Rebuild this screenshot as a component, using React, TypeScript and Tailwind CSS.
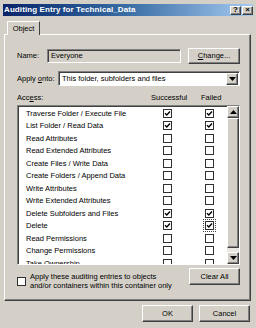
const rows = [
  { name: "Traverse Folder / Execute File", s: true, f: true },
  { name: "List Folder / Read Data", s: true, f: true },
  { name: "Read Attributes", s: false, f: false },
  { name: "Read Extended Attributes", s: false, f: false },
  { name: "Create Files / Write Data", s: false, f: false },
  { name: "Create Folders / Append Data", s: false, f: false },
  { name: "Write Attributes", s: false, f: false },
  { name: "Write Extended Attributes", s: false, f: false },
  { name: "Delete Subfolders and Files", s: true, f: true },
  { name: "Delete", s: true, f: true, focus: true },
  { name: "Read Permissions", s: false, f: false },
  { name: "Change Permissions", s: false, f: false },
  { name: "Take Ownership", s: false, f: false },
]

const raised =
  "border border-t-white border-l-white border-r-[#404040] border-b-[#404040] shadow-[inset_-1px_-1px_#808080] bg-[#d4d0c8]"
const sunken =
  "border border-t-[#808080] border-l-[#808080] border-r-white border-b-white shadow-[inset_1px_1px_#404040]"

function Check({ on, focus }: { on: boolean; focus?: boolean }) {
  return (
    <div className={focus ? "outline outline-1 outline-dotted outline-[#404040] outline-offset-1" : ""}>
      <div className="w-[9px] h-[9px] bg-white border border-[#303030] flex items-center justify-center">
        {on && (
          <svg width="7" height="7" viewBox="0 0 7 7">
            <path d="M1 3.2 L2.8 5 L6 1.5" stroke="#000" strokeWidth="1.4" fill="none" />
          </svg>
        )}
      </div>
    </div>
  )
}

function Arrow({ up }: { up?: boolean }) {
  return (
    <div className={`${raised} w-[12px] h-[12px] flex items-center justify-center`}>
      <svg width="7" height="4" viewBox="0 0 7 4">
        <path d={up ? "M0 4 L3.5 0 L7 4 Z" : "M0 0 L3.5 4 L7 0 Z"} fill="#000" />
      </svg>
    </div>
  )
}

export default function App() {
  return (
    <div
      className="w-[256px] h-[328px] bg-[#d4d0c8] overflow-hidden text-[7.5px] text-black px-[3px] pt-[4px]"
      style={{ fontFamily: '"Liberation Sans", Arial, sans-serif' }}
    >
      {/* title bar */}
      <div className="h-[12px] flex items-center justify-between pl-[1px] pr-[0px] bg-gradient-to-r from-[#0a246a] via-[#3a6ea5] to-[#a6caf0]">
        <span className="text-white font-bold text-[8px] leading-none tracking-[0.1px]">
          Auditing Entry for Technical_Data
        </span>
        <div className="flex gap-[1px]">
          <div className={`${raised} w-[11px] h-[9px] flex items-center justify-center text-[8px] font-bold leading-none`}>?</div>
          <div className={`${raised} w-[11px] h-[9px] flex items-center justify-center text-[8px] font-bold leading-none`}>×</div>
        </div>
      </div>

      {/* tab */}
      <div className="mt-[5px] ml-[4px] w-[33px] h-[14px] border border-b-0 border-t-white border-l-white border-r-[#404040] relative z-10 flex items-center justify-center bg-[#d4d0c8]">
        <span className="leading-none">Object</span>
      </div>

      {/* panel */}
      <div className="-mt-[1px] ml-[1px] w-[247px] h-[267px] border border-t-white border-l-white border-r-[#404040] border-b-[#404040] shadow-[inset_-1px_-1px_#808080] pl-[12px] pr-[10px] pt-[13px]">
        <div className="flex items-center h-[16px]">
          <span className="w-[30px]">Name:</span>
          <div className={`${sunken} w-[134px] h-[14px] flex items-center pl-[3px] bg-[#d4d0c8]`}>Everyone</div>
          <div className={`${raised} ml-[7px] w-[52px] h-[16px] flex items-center justify-center`}>
            <span>
              <span className="underline">C</span>hange...
            </span>
          </div>
        </div>

        <div className="flex items-center h-[15px] mt-[7px]">
          <span className="w-[41px]">
            Apply <span className="underline">o</span>nto:
          </span>
          <div className={`${sunken} w-[182px] h-[15px] flex items-center bg-white pl-[3px] pr-[1px]`}>
            <span className="flex-1">This folder, subfolders and files</span>
            <Arrow />
          </div>
        </div>

        <div className="flex items-center h-[10px] mt-[7px]">
          <span className="w-[134px]">
            Acc<span className="underline">e</span>ss:
          </span>
          <span className="w-[50px]">Successful</span>
          <span>Failed</span>
        </div>

        <div className={`${sunken} mt-[2px] w-[223px] h-[160px] bg-white flex`}>
          <div className="flex-1 overflow-hidden pt-[1px]">
            {rows.map((r, i) => (
              <div key={i} className="h-[12.5px] flex items-center">
                <span className="w-[145px] pl-[8px] whitespace-nowrap">{r.name}</span>
                <Check on={r.s} />
                <span className="w-[33px]" />
                <Check on={r.f} focus={r.focus} />
              </div>
            ))}
          </div>
          <div className="w-[12px] flex flex-col bg-[#e8e6e1]">
            <Arrow up />
            <div className={`${raised} h-[130px]`} />
            <div className="flex-1" />
            <Arrow />
          </div>
        </div>

        <div className="flex items-start mt-[3px]">
          <div className="mt-[9px] w-[9px] h-[9px] bg-white border border-[#303030]" />
          <span className="ml-[4px] leading-[9px] mt-[4px] w-[145px]">
            Apply these auditing entries to objects
            <br />
            and/or containers within this container only
          </span>
          <div className={`${raised} ml-auto w-[51px] h-[17px] flex items-center justify-center`}>
            Clear All
          </div>
        </div>
      </div>

      {/* dialog buttons */}
      <div className="flex justify-end gap-[6px] mt-[4px] pr-[3px]">
        <div className={`${raised} w-[51px] h-[17px] flex items-center justify-center`}>OK</div>
        <div className={`${raised} w-[51px] h-[17px] flex items-center justify-center`}>Cancel</div>
      </div>
    </div>
  )
}
